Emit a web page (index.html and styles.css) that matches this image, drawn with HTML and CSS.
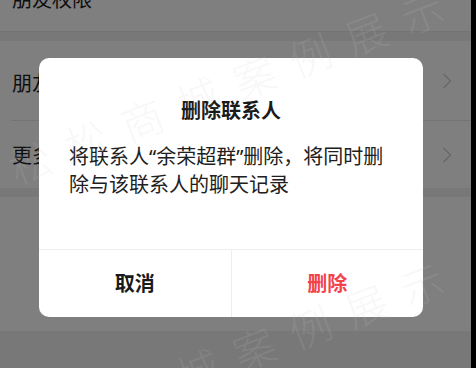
FILE: index.html
```html
<!DOCTYPE html>
<html lang="zh-CN">
<head>
<meta charset="utf-8">
<link rel="stylesheet" href="styles.css">
</head>
<body>
<div class="screen">
  <div class="page">
    <div class="row row-first"><span class="label">朋友权限</span></div>
    <div class="band"></div>
    <div class="group">
      <div class="row row-second">
        <span class="label">朋友圈和状态</span>
        <svg class="chev" width="10" height="16" viewBox="0 0 10 16"><polyline points="1.5,1 8.5,8 1.5,15" fill="none" stroke="#cfcfd2" stroke-width="1.4"/></svg>
      </div>
      <div class="divider"></div>
      <div class="row row-third">
        <span class="label">更多信息</span>
        <svg class="chev" width="10" height="16" viewBox="0 0 10 16"><polyline points="1.5,1 8.5,8 1.5,15" fill="none" stroke="#cfcfd2" stroke-width="1.4"/></svg>
      </div>
    </div>
    <div class="band"></div>
    <div class="block"></div>
  </div>
  <div class="edge"></div>

  <div class="mask"></div>

  <div class="dialog">
    <div class="dialog-body">
      <div class="dialog-title">删除联系人</div>
      <div class="dialog-text">将联系人“余荣超群”删除，将同时删除与该联系人的聊天记录</div>
    </div>
    <div class="dialog-actions">
      <div class="btn btn-cancel">取消</div>
      <div class="btn btn-delete">删除</div>
    </div>
  </div>

  <div class="watermark">
    <span class="wm wm-1">松松商城案例展示</span>
    <span class="wm wm-2">松松商城案例展示</span>
  </div>
</div>
</body>
</html>
```
FILE: styles.css
```css
* { box-sizing: border-box; }
html, body {
  margin: 0;
  padding: 0;
  background: #000;
}
body {
  font-family: "Noto Sans CJK SC", "Noto Sans", sans-serif;
  color: #1f1f1f;
}
.screen {
  position: relative;
  width: 476px;
  height: 368px;
  overflow: hidden;
  display: flex;
  background: #f1f0f3;
}
.page {
  flex: 1;
  display: flex;
  flex-direction: column;
  margin-top: -34px;
  background: #f1f0f3;
}
.edge {
  width: 5px;
  background: #000;
  position: relative;
  z-index: 5;
}
.row {
  display: flex;
  align-items: center;
  justify-content: space-between;
  background: #fff;
  padding: 0 19px 0 12px;
}
.label {
  font-size: 20px;
  line-height: 28px;
  color: #1c1c1c;
}
.row-first {
  height: 66px;
  border-bottom: 1px solid #e6e5ea;
}
.band {
  height: 9px;
}
.row-second {
  height: 79px;
}
.row-second .label {
  padding-top: 4px;
}
.divider {
  height: 1px;
  background: #e9e9ec;
  margin-left: 11px;
  box-shadow: -11px 0 0 #fff;
}
.row-third {
  height: 67px;
}
.chev {
  display: block;
}
.block {
  height: 134px;
  background: #fff;
}
.mask {
  position: absolute;
  inset: 0;
  background: rgba(0, 0, 0, 0.5);
}
.dialog {
  position: absolute;
  left: 39px;
  top: 58px;
  width: 384px;
  height: 259px;
  background: #fff;
  border-radius: 10px;
  display: flex;
  flex-direction: column;
  overflow: hidden;
}
.dialog-body {
  flex: 1;
  padding: 38px 26px 0 30px;
}
.dialog-title {
  text-align: center;
  font-size: 20px;
  line-height: 28px;
  font-weight: 700;
  color: #1a1a1a;
  padding-right: 4px;
}
.dialog-text {
  margin-top: 19px;
  font-family: "Noto Sans", "Noto Sans CJK SC", sans-serif;
  font-size: 20px;
  line-height: 28px;
  color: #202020;
}
.dialog-actions {
  height: 68px;
  border-top: 1px solid #ededed;
  display: flex;
}
.btn {
  flex: 1;
  display: flex;
  align-items: center;
  justify-content: center;
  font-size: 20px;
  font-weight: 700;
  padding-bottom: 2px;
}
.btn-cancel {
  color: #1a1a1a;
  border-right: 1px solid #ededed;
}
.btn-delete {
  color: #f2434a;
}
.watermark {
  position: absolute;
  inset: 0;
  pointer-events: none;
  z-index: 4;
}
.wm {
  position: absolute;
  left: 10px;
  font-size: 42px;
  line-height: 42px;
  font-weight: 300;
  letter-spacing: 18px;
  white-space: nowrap;
  color: rgba(200, 200, 200, 0.15);
  transform-origin: 0 50%;
  transform: rotate(-21deg);
}
.wm-1 { top: 148px; }
.wm-2 { top: 420px; }
```
